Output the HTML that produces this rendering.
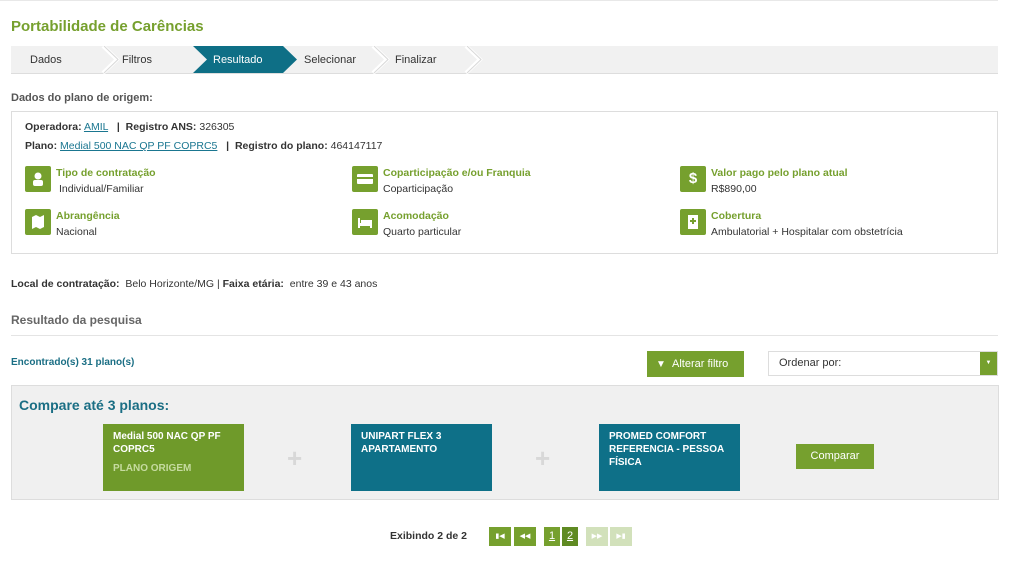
<!DOCTYPE html><html><head><meta charset="utf-8"><style>
body{margin:0;background:#fff;font-family:"Liberation Sans",Arial,sans-serif;font-size:11px;color:#333;width:1024px;height:565px;overflow:hidden;position:relative}
.a{position:absolute}
.g{color:#76a02e}
.ic{position:absolute;width:26px;height:26px;background:#76a02e;border-radius:2px}
.lbl{position:absolute;color:#76a02e;font-weight:bold;font-size:10.5px}
.val{position:absolute;font-size:10.5px}
a{color:#1a7690;text-decoration:underline}
.card{position:absolute;top:424px;width:141px;height:67px;color:#fff;font-weight:bold;font-size:10px;line-height:13px;padding:6px 10px;box-sizing:border-box}
.pg{position:absolute;top:527px;height:19px;background:#76a02e;color:#fff;font-size:7px;text-align:center;line-height:19px}
</style></head><body>
<div class="a" style="left:0;top:0;width:998px;height:1px;background:#e8e8e8"></div>
<div class="a g" style="left:11px;top:18px;font-size:15px;font-weight:bold">Portabilidade de Carências</div>
<div class="a" style="left:11px;top:46px;width:987px;height:27px;background:#f1f1f1;border-bottom:1px solid #ddd"></div>
<svg class="a" style="left:11px;top:46px" width="480" height="28">
<polygon points="182,0 272,0 286,13.5 272,27 182,27 196,13.5" fill="#0e6f86"/>
<polyline points="92,0 106,13.5 92,27" fill="none" stroke="#fff" stroke-width="4"/>
<polyline points="93,0 107,13.5 93,27" fill="none" stroke="#d8d8d8" stroke-width="1"/>
<polyline points="362,0 376,13.5 362,27" fill="none" stroke="#fff" stroke-width="4"/>
<polyline points="363,0 377,13.5 363,27" fill="none" stroke="#d8d8d8" stroke-width="1"/>
<polyline points="455,0 469,13.5 455,27" fill="none" stroke="#fff" stroke-width="4"/>
<polyline points="456,0 470,13.5 456,27" fill="none" stroke="#d8d8d8" stroke-width="1"/>
</svg>
<div class="a" style="left:30px;top:54px;font-size:11px">Dados</div>
<div class="a" style="left:122px;top:54px">Filtros</div>
<div class="a" style="left:213px;top:54px;color:#fff">Resultado</div>
<div class="a" style="left:304px;top:54px">Selecionar</div>
<div class="a" style="left:395px;top:54px">Finalizar</div>
<div class="a" style="left:11px;top:92px;font-weight:bold;color:#555;font-size:11px">Dados do plano de origem:</div>
<div class="a" style="left:11px;top:111px;width:985px;height:141px;border:1px solid #ddd"></div>
<div class="a" style="left:25px;top:121px;font-size:10.5px"><b>Operadora:</b> <a>AMIL</a> &nbsp; <b>|</b> &nbsp;<b>Registro ANS:</b> 326305</div>
<div class="a" style="left:25px;top:140px;font-size:10.5px"><b>Plano:</b> <a>Medial 500 NAC QP PF COPRC5</a> &nbsp; <b>|</b> &nbsp;<b>Registro do plano:</b> 464147117</div>
<div class="ic" style="left:25px;top:166px"><svg width="26" height="26"><circle cx="13" cy="10" r="3.5" fill="#fff"/><rect x="8" y="14" width="10" height="6" rx="2" fill="#fff"/></svg></div>
<div class="lbl" style="left:56px;top:167px">Tipo de contratação</div><div class="val" style="left:59px;top:183px">Individual/Familiar</div>
<div class="ic" style="left:25px;top:209px"><svg width="26" height="26"><polygon points="7,8 11,6 15,8 19,6 19,18 15,20 11,18 7,20" fill="#fff"/></svg></div>
<div class="lbl" style="left:56px;top:210px">Abrangência</div><div class="val" style="left:56px;top:226px">Nacional</div>
<div class="ic" style="left:352px;top:166px"><svg width="26" height="26"><rect x="5" y="8" width="16" height="10" rx="1" fill="#fff"/><rect x="5" y="11" width="16" height="2" fill="#76a02e"/></svg></div>
<div class="lbl" style="left:383px;top:167px">Coparticipação e/ou Franquia</div><div class="val" style="left:383px;top:183px">Coparticipação</div>
<div class="ic" style="left:352px;top:209px"><svg width="26" height="26"><rect x="6" y="9" width="2" height="10" fill="#fff"/><rect x="6" y="14" width="14" height="3" fill="#fff"/><rect x="9" y="11" width="11" height="3" fill="#fff"/><rect x="18" y="14" width="2" height="5" fill="#fff"/></svg></div>
<div class="lbl" style="left:383px;top:210px">Acomodação</div><div class="val" style="left:383px;top:226px">Quarto particular</div>
<div class="ic" style="left:680px;top:166px"><div style="color:#fff;font-weight:bold;font-size:15px;text-align:center;line-height:26px">$</div></div>
<div class="lbl" style="left:711px;top:167px">Valor pago pelo plano atual</div><div class="val" style="left:711px;top:183px">R$890,00</div>
<div class="ic" style="left:680px;top:209px"><svg width="26" height="26"><rect x="8" y="6" width="10" height="14" fill="#fff"/><rect x="12" y="9" width="2" height="6" fill="#76a02e"/><rect x="10" y="11" width="6" height="2" fill="#76a02e"/></svg></div>
<div class="lbl" style="left:711px;top:210px">Cobertura</div><div class="val" style="left:711px;top:226px">Ambulatorial + Hospitalar com obstetrícia</div>
<div class="a" style="left:11px;top:278px;font-size:10.5px"><b>Local de contratação:</b>&nbsp; Belo Horizonte/MG | <b>Faixa etária:</b>&nbsp; entre 39 e 43 anos</div>
<div class="a" style="left:11px;top:313px;font-weight:bold;color:#666;font-size:12px">Resultado da pesquisa</div>
<div class="a" style="left:11px;top:335px;width:987px;height:1px;background:#e4e4e4"></div>
<div class="a" style="left:11px;top:357px;color:#1a6e84;font-weight:bold;font-size:10px">Encontrado(s) 31 plano(s)</div>
<div class="a" style="left:647px;top:351px;width:97px;height:26px;background:#76a02e;color:#fff;font-size:11px;line-height:26px"><span style="margin-left:9px;font-size:10px">▼</span> &nbsp;Alterar filtro</div>
<div class="a" style="left:768px;top:351px;width:228px;height:23px;border:1px solid #ddd"><span style="position:absolute;left:10px;top:5px">Ordenar por:</span><div style="position:absolute;right:0;top:0;width:17px;height:23px;background:#76a02e;color:#fff;font-size:6px;text-align:center;line-height:23px">▼</div></div>
<div class="a" style="left:11px;top:385px;width:986px;height:113px;background:#f0f0f0;border:1px solid #ddd"></div>
<div class="a" style="left:19px;top:397px;color:#1a6e84;font-weight:bold;font-size:14px">Compare até 3 planos:</div>
<div class="card" style="left:103px;background:#6f9a2a">Medial 500 NAC QP PF COPRC5<div style="margin-top:6px;color:#c6dba0;font-weight:bold">PLANO ORIGEM</div></div>
<div class="a" style="left:287px;top:443px;color:#d8d8d8;font-size:26px;font-weight:bold">+</div>
<div class="card" style="left:351px;background:#0e7088">UNIPART FLEX 3 APARTAMENTO</div>
<div class="a" style="left:535px;top:443px;color:#d8d8d8;font-size:26px;font-weight:bold">+</div>
<div class="card" style="left:599px;background:#0e7088">PROMED COMFORT REFERENCIA - PESSOA FÍSICA</div>
<div class="a" style="left:796px;top:444px;width:78px;height:25px;background:#76a02e;color:#fff;font-size:11px;text-align:center;line-height:25px">Comparar</div>
<div class="a" style="left:390px;top:530px;font-weight:bold;font-size:10.5px">Exibindo 2 de 2</div>
<div class="pg" style="left:489px;width:22px">▮◀</div>
<div class="pg" style="left:514px;width:22px">◀◀</div>
<div class="pg" style="left:544px;width:16px;font-size:11px;text-decoration:underline">1</div>
<div class="pg" style="left:562px;width:16px;font-size:11px;text-decoration:underline;background:#5f8a22">2</div>
<div class="pg" style="left:586px;width:22px;background:#d2e1bb">▶▶</div>
<div class="pg" style="left:610px;width:22px;background:#d2e1bb">▶▮</div>
</body></html>
